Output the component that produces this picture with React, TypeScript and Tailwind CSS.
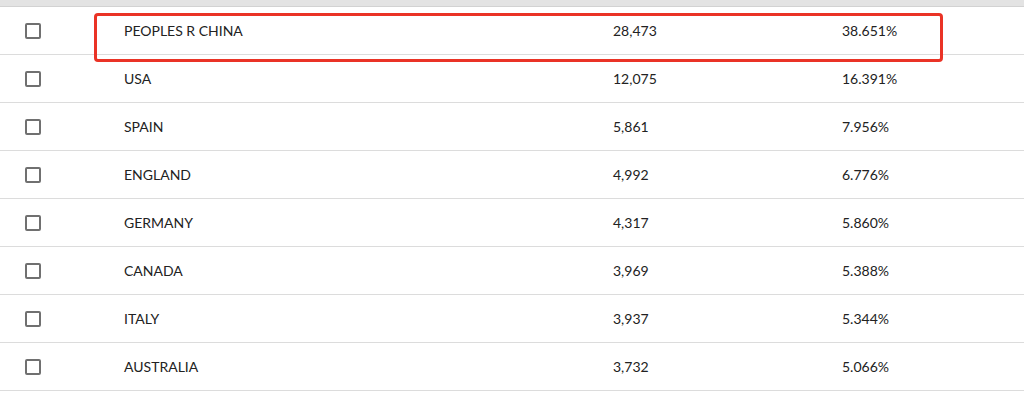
import React from "react";

interface RowData {
    name: string;
    count: string;
    percent: string;
}

const rows: RowData[] = [
    { name: "PEOPLES R CHINA", count: "28,473", percent: "38.651%" },
    { name: "USA", count: "12,075", percent: "16.391%" },
    { name: "SPAIN", count: "5,861", percent: "7.956%" },
    { name: "ENGLAND", count: "4,992", percent: "6.776%" },
    { name: "GERMANY", count: "4,317", percent: "5.860%" },
    { name: "CANADA", count: "3,969", percent: "5.388%" },
    { name: "ITALY", count: "3,937", percent: "5.344%" },
    { name: "AUSTRALIA", count: "3,732", percent: "5.066%" },
];

function Row(props: { row: RowData; highlight?: boolean }) {
    return (
        <div className="relative grid grid-cols-[124px_489px_229px_1fr] items-center h-[48px] border-b border-[#dcdcdc] text-[14px] text-[#222222]">
            <div className="pl-[25px] flex items-center">
                <span className="block w-[16px] h-[16px] border-2 border-[#707070] rounded-[2px] bg-white" />
            </div>
            <div>{props.row.name}</div>
            <div>{props.row.count}</div>
            <div>{props.row.percent}</div>
            {/* annotation box drawn over the first row */}
            {props.highlight && (
                <div className="absolute left-[94px] top-[6px] w-[849px] h-[49px] border-[3px] border-[#ea3326] rounded-[4px] pointer-events-none" />
            )}
        </div>
    );
}

export default function App() {
    return (
        <div
            className="w-[1024px] h-[399px] bg-white overflow-hidden"
            style={{ fontFamily: "Lato, 'Liberation Sans', sans-serif" }}
        >
            <div className="h-[7px] bg-[#e3e3e3] border-b border-[#d2d2d2]" />
            {rows.map((r, i) => (
                <Row key={r.name} row={r} highlight={i === 0} />
            ))}
        </div>
    );
}
